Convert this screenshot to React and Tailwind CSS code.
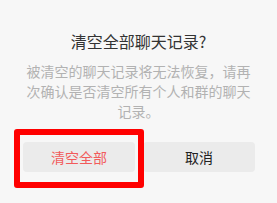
export default function App() {
  return (
    <div
      className="relative w-[277px] h-[203px] bg-[#f7f7f7] overflow-hidden"
      style={{ fontFamily: '"Noto Sans CJK SC", "Noto Sans", sans-serif' }}
    >
      <h1 className="pt-[29px] text-center text-base leading-6 text-[#333333] font-normal">
        清空全部聊天记录?
      </h1>
      <p className="mt-2 px-6 text-center text-sm leading-5 text-[#b2b2b2]">
        被清空的聊天记录将无法恢复，请再次确认是否清空所有个人和群的聊天记录。
      </p>
      <div className="mt-[21px] flex gap-2 pl-[23px] pr-[22px]">
        <button className="flex-1 h-[30px] rounded bg-[#ebebeb] text-sm text-[#f25b5b]">
          清空全部
        </button>
        <button className="flex-1 h-[30px] rounded bg-[#ebebeb] text-sm text-[#222222]">
          取消
        </button>
      </div>
      {/* annotation box */}
      <div className="absolute left-[14px] top-[129px] w-[130px] h-[59px] border-[6px] border-[#ff0000] rounded-[3px]" />
    </div>
  )
}
